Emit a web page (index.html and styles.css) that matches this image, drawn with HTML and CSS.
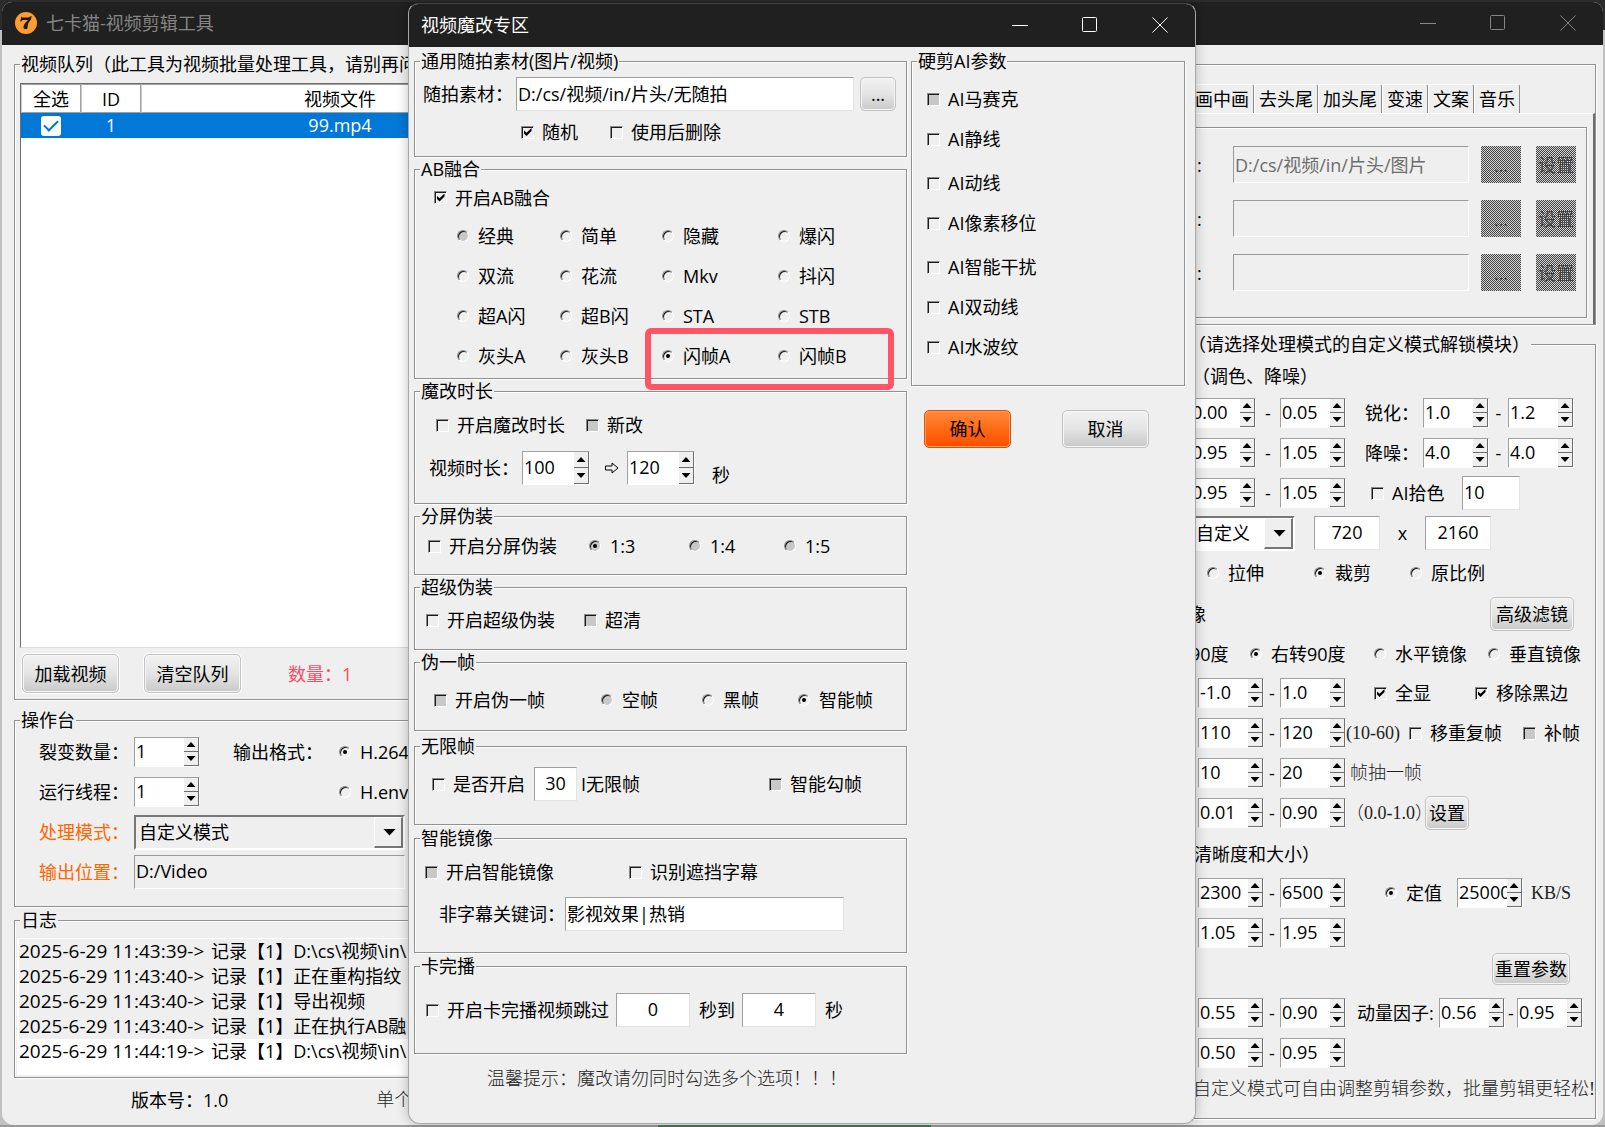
FILE: index.html
```html
<!DOCTYPE html>
<html lang="zh-CN">
<head>
<meta charset="utf-8">
<title>七卡猫-视频剪辑工具</title>
<link rel="stylesheet" href="styles.css">
</head>
<body>
<main class="window main-window">
  <header class="titlebar titlebar-inactive">
    <svg class="logo" viewBox="0 0 24 24" aria-hidden="true"><circle cx="12" cy="12" r="11" fill="#ff9c32"/><path d="M7.400 5.200l.8 1.200h6.200l2.400-1.200h.9l-.9 3.600c-2.600 2.800-3.400 5.400-3.200 8.200-.6 1.600-3.600 1.600-4.200-.2-.2-3 2-5.400 4.400-7.400l-.4-.4H9.200c-1 0-1.500.5-2 1.600h-.9z" fill="#1d1a18"/></svg>
    <h1 class="caption">七卡猫-视频剪辑工具</h1>
    <div class="window-buttons">
      <button type="button" aria-label="最小化"><svg viewBox="0 0 16 16"><path d="M0 8.500h16"/></svg></button>
      <button type="button" aria-label="最大化"><svg viewBox="0 0 16 16"><rect x=".5" y=".5" width="14" height="14" rx="1"/></svg></button>
      <button type="button" aria-label="关闭"><svg viewBox="0 0 16 16"><path d="M.5.5l15 15M15.500.5l-15 15"/></svg></button>
    </div>
  </header>
  <div class="main-body">
    <div class="left-pane">
      <fieldset class="queue">
        <legend>视频队列（此工具为视频批量处理工具，请别再问</legend>
        <div class="table-box">
          <table>
            <thead><tr><th class="col-small">全选</th><th class="col-small">ID</th><th>视频文件</th></tr></thead>
            <tbody><tr><td><input class="tick-modern" type="checkbox" checked aria-label="选择 99.mp4"></td><td>1</td><td>99.mp4</td></tr></tbody>
          </table>
        </div>
        <div class="queue-actions">
          <button type="button" class="btn btn-tall">加载视频</button>
          <button type="button" class="btn btn-tall">清空队列</button>
          <span class="count">数量：1</span>
        </div>
      </fieldset>
      <fieldset class="console">
        <legend>操作台</legend>
        <div class="row console-row">
          <label for="split">裂变数量：</label>
          <span class="spin"><input id="split" type="text" value="1"><button type="button" aria-label="加"></button><button type="button" aria-label="减"></button></span>
          <span class="format-label">输出格式：</span>
          <label class="opt"><input type="radio" name="fmt" checked>H.264</label>
        </div>
        <div class="row console-row">
          <label for="threads">运行线程：</label>
          <span class="spin"><input id="threads" type="text" value="1"><button type="button" aria-label="加"></button><button type="button" aria-label="减"></button></span>
          <span></span>
          <label class="opt"><input type="radio" name="fmt">H.envc</label>
        </div>
        <div class="row console-wide">
          <label class="accent" for="mode">处理模式：</label>
          <span class="combo"><select id="mode"><option>自定义模式</option></select></span>
        </div>
        <div class="row console-wide">
          <label class="accent" for="out">输出位置：</label>
          <input class="field field-flat" id="out" type="text" value="D:/Video">
        </div>
      </fieldset>
      <fieldset class="log">
        <legend>日志</legend>
        <ul class="log-list">
          <li><span class="stamp">2025-6-29 11:43:39-&gt;</span>记录【1】D:\cs\视频\in\</li>
          <li><span class="stamp">2025-6-29 11:43:40-&gt;</span>记录【1】正在重构指纹</li>
          <li><span class="stamp">2025-6-29 11:43:40-&gt;</span>记录【1】导出视频</li>
          <li><span class="stamp">2025-6-29 11:43:40-&gt;</span>记录【1】正在执行AB融</li>
          <li><span class="stamp">2025-6-29 11:44:19-&gt;</span>记录【1】D:\cs\视频\in\</li>
        </ul>
      </fieldset>
      <footer class="main-footer"><span>版本号：1.0</span><span class="kai">单个</span></footer>
    </div>

    <div class="right-pane">
      <section class="tab-group">
        <nav class="tabs">
          <button type="button">画中画</button><button type="button">去头尾</button><button type="button">加头尾</button><button type="button">变速</button><button type="button">文案</button><button type="button">音乐</button>
        </nav>
        <div class="tab-panel">
          <div class="tab-inner">
            <div class="path-row"><label for="p1">:</label><input class="field" id="p1" type="text" value="D:/cs/视频/in/片头/图片" disabled><button type="button" class="dither" disabled>...</button><button type="button" class="dither" disabled>设置</button></div>
            <div class="path-row"><label for="p2">:</label><input class="field" id="p2" type="text" disabled><button type="button" class="dither" disabled>...</button><button type="button" class="dither" disabled>设置</button></div>
            <div class="path-row"><label for="p3">:</label><input class="field" id="p3" type="text" disabled><button type="button" class="dither" disabled>...</button><button type="button" class="dither" disabled>设置</button></div>
          </div>
        </div>
      </section>
      <fieldset class="custom">
        <legend>（请选择处理模式的自定义模式解锁模块）</legend>
        <div class="row custom-head">（调色、降噪）</div>
        <div class="row range-a">
          <span class="spin"><input type="text" value="0.00" aria-label="亮度最小"><button type="button" aria-label="加"></button><button type="button" aria-label="减"></button></span><span class="dash">-</span>
          <span class="spin"><input type="text" value="0.05" aria-label="亮度最大"><button type="button" aria-label="加"></button><button type="button" aria-label="减"></button></span>
          <label for="sharp">锐化：</label>
          <span class="spin"><input id="sharp" type="text" value="1.0"><button type="button" aria-label="加"></button><button type="button" aria-label="减"></button></span><span class="dash">-</span>
          <span class="spin"><input type="text" value="1.2" aria-label="锐化最大"><button type="button" aria-label="加"></button><button type="button" aria-label="减"></button></span>
        </div>
        <div class="row range-a">
          <span class="spin"><input type="text" value="0.95" aria-label="对比度最小"><button type="button" aria-label="加"></button><button type="button" aria-label="减"></button></span><span class="dash">-</span>
          <span class="spin"><input type="text" value="1.05" aria-label="对比度最大"><button type="button" aria-label="加"></button><button type="button" aria-label="减"></button></span>
          <label for="noise">降噪：</label>
          <span class="spin"><input id="noise" type="text" value="4.0"><button type="button" aria-label="加"></button><button type="button" aria-label="减"></button></span><span class="dash">-</span>
          <span class="spin"><input type="text" value="4.0" aria-label="降噪最大"><button type="button" aria-label="加"></button><button type="button" aria-label="减"></button></span>
        </div>
        <div class="row range-pick">
          <span class="spin"><input type="text" value="0.95" aria-label="饱和度最小"><button type="button" aria-label="加"></button><button type="button" aria-label="减"></button></span><span class="dash">-</span>
          <span class="spin"><input type="text" value="1.05" aria-label="饱和度最大"><button type="button" aria-label="加"></button><button type="button" aria-label="减"></button></span>
          <label class="opt"><input type="checkbox">AI拾色</label>
          <input class="field" type="text" value="10" aria-label="拾色数量">
        </div>
        <div class="row size-row">
          <span class="combo combo-white"><select aria-label="分辨率"><option>自定义</option></select></span>
          <input class="field centered" type="text" value="720" aria-label="宽"><span class="dash">x</span><input class="field centered" type="text" value="2160" aria-label="高">
        </div>
        <div class="row fit-row">
          <label class="opt"><input type="radio" name="fit">拉伸</label>
          <label class="opt"><input type="radio" name="fit" checked>裁剪</label>
          <label class="opt"><input type="radio" name="fit">原比例</label>
        </div>
        <div class="row filter-row"><span>像</span><button type="button" class="btn btn-filter">高级滤镜</button></div>
        <div class="row rotate-row">
          <span>90度</span>
          <label class="opt"><input type="radio" name="rot" checked>右转90度</label>
          <label class="opt"><input type="radio" name="mir">水平镜像</label>
          <label class="opt"><input type="radio" name="mir">垂直镜像</label>
        </div>
        <div class="row range-b show-row">
          <span class="spin"><input type="text" value="-1.0" aria-label="缩放最小"><button type="button" aria-label="加"></button><button type="button" aria-label="减"></button></span><span class="dash">-</span>
          <span class="spin"><input type="text" value="1.0" aria-label="缩放最大"><button type="button" aria-label="加"></button><button type="button" aria-label="减"></button></span>
          <span></span>
          <label class="opt"><input type="checkbox" checked>全显</label>
          <label class="opt"><input type="checkbox" checked>移除黑边</label>
        </div>
        <div class="row range-b fps-row">
          <span class="spin"><input type="text" value="110" aria-label="帧率最小"><button type="button" aria-label="加"></button><button type="button" aria-label="减"></button></span><span class="dash">-</span>
          <span class="spin"><input type="text" value="120" aria-label="帧率最大"><button type="button" aria-label="加"></button><button type="button" aria-label="减"></button></span>
          <span class="kai">(10-60)</span>
          <label class="opt"><input type="checkbox">移重复帧</label>
          <label class="opt"><input type="checkbox" class="mixed">补帧</label>
        </div>
        <div class="row range-b drop-row">
          <span class="spin"><input type="text" value="10" aria-label="抽帧最小"><button type="button" aria-label="加"></button><button type="button" aria-label="减"></button></span><span class="dash">-</span>
          <span class="spin"><input type="text" value="20" aria-label="抽帧最大"><button type="button" aria-label="加"></button><button type="button" aria-label="减"></button></span>
          <span class="kai">帧抽一帧</span>
        </div>
        <div class="row range-b alpha-row">
          <span class="spin"><input type="text" value="0.01" aria-label="透明最小"><button type="button" aria-label="加"></button><button type="button" aria-label="减"></button></span><span class="dash">-</span>
          <span class="spin"><input type="text" value="0.90" aria-label="透明最大"><button type="button" aria-label="加"></button><button type="button" aria-label="减"></button></span>
          <span class="kai">（0.0-1.0）</span>
          <button type="button" class="btn">设置</button>
        </div>
        <div class="row clarity-row">清晰度和大小）</div>
        <div class="row range-b rate-row">
          <span class="spin"><input type="text" value="2300" aria-label="码率最小"><button type="button" aria-label="加"></button><button type="button" aria-label="减"></button></span><span class="dash">-</span>
          <span class="spin"><input type="text" value="6500" aria-label="码率最大"><button type="button" aria-label="加"></button><button type="button" aria-label="减"></button></span>
          <label class="opt"><input type="radio" name="rate" checked>定值</label>
          <span class="spin"><input type="text" value="25000" aria-label="固定码率"><button type="button" aria-label="加"></button><button type="button" aria-label="减"></button></span>
          <span class="kai">KB/S</span>
        </div>
        <div class="row range-b">
          <span class="spin"><input type="text" value="1.05" aria-label="倍率最小"><button type="button" aria-label="加"></button><button type="button" aria-label="减"></button></span><span class="dash">-</span>
          <span class="spin"><input type="text" value="1.95" aria-label="倍率最大"><button type="button" aria-label="加"></button><button type="button" aria-label="减"></button></span>
        </div>
        <div class="row reset-row"><button type="button" class="btn btn-reset">重置参数</button></div>
        <div class="row range-b factor-row">
          <span class="spin"><input type="text" value="0.55" aria-label="因子最小"><button type="button" aria-label="加"></button><button type="button" aria-label="减"></button></span><span class="dash">-</span>
          <span class="spin"><input type="text" value="0.90" aria-label="因子最大"><button type="button" aria-label="加"></button><button type="button" aria-label="减"></button></span>
          <label for="mom">动量因子:</label>
          <span class="spin"><input id="mom" type="text" value="0.56"><button type="button" aria-label="加"></button><button type="button" aria-label="减"></button></span><span class="dash">-</span>
          <span class="spin"><input type="text" value="0.95" aria-label="动量最大"><button type="button" aria-label="加"></button><button type="button" aria-label="减"></button></span>
        </div>
        <div class="row range-b">
          <span class="spin"><input type="text" value="0.50" aria-label="权重最小"><button type="button" aria-label="加"></button><button type="button" aria-label="减"></button></span><span class="dash">-</span>
          <span class="spin"><input type="text" value="0.95" aria-label="权重最大"><button type="button" aria-label="加"></button><button type="button" aria-label="减"></button></span>
        </div>
        <p class="custom-tip kai">自定义模式可自由调整剪辑参数，批量剪辑更轻松!</p>
      </fieldset>
    </div>
  </div>
</main>

<section class="window dialog" role="dialog" aria-labelledby="dialog-title">
  <header class="titlebar">
    <h2 class="caption" id="dialog-title">视频魔改专区</h2>
    <div class="window-buttons">
      <button type="button" aria-label="最小化"><svg viewBox="0 0 16 16"><path d="M0 8.500h16"/></svg></button>
      <button type="button" aria-label="最大化"><svg viewBox="0 0 16 16"><rect x=".5" y=".5" width="14" height="14" rx="1"/></svg></button>
      <button type="button" aria-label="关闭"><svg viewBox="0 0 16 16"><path d="M.5.5l15 15M15.500.5l-15 15"/></svg></button>
    </div>
  </header>
  <div class="dialog-body">
    <div class="dialog-main">
      <fieldset class="g-source">
        <legend>通用随拍素材(图片/视频)</legend>
        <div class="row r-source"><label for="src">随拍素材：</label><input class="field" id="src" type="text" value="D:/cs/视频/in/片头/无随拍"><button type="button" class="btn">...</button></div>
        <div class="row r-source-opts"><label class="opt"><input type="checkbox" checked>随机</label><label class="opt"><input type="checkbox">使用后删除</label></div>
      </fieldset>
      <fieldset class="g-blend">
        <legend>AB融合</legend>
        <div class="row r-blend-on"><label class="opt"><input type="checkbox" checked>开启AB融合</label></div>
        <div class="row r-blend"><label class="opt"><input type="radio" name="ab" class="mixed">经典</label><label class="opt"><input type="radio" name="ab">简单</label><label class="opt"><input type="radio" name="ab">隐藏</label><label class="opt"><input type="radio" name="ab">爆闪</label></div>
        <div class="row r-blend"><label class="opt"><input type="radio" name="ab">双流</label><label class="opt"><input type="radio" name="ab">花流</label><label class="opt"><input type="radio" name="ab">Mkv</label><label class="opt"><input type="radio" name="ab">抖闪</label></div>
        <div class="row r-blend"><label class="opt"><input type="radio" name="ab">超A闪</label><label class="opt"><input type="radio" name="ab">超B闪</label><label class="opt"><input type="radio" name="ab">STA</label><label class="opt"><input type="radio" name="ab">STB</label></div>
        <div class="row r-blend"><label class="opt"><input type="radio" name="ab">灰头A</label><label class="opt"><input type="radio" name="ab">灰头B</label><label class="opt"><input type="radio" name="ab" checked>闪帧A</label><label class="opt"><input type="radio" name="ab">闪帧B</label></div>
        <span class="highlight"></span>
      </fieldset>
      <fieldset class="g-length">
        <legend>魔改时长</legend>
        <div class="row r-length-on"><label class="opt"><input type="checkbox">开启魔改时长</label><label class="opt"><input type="checkbox" class="mixed">新改</label></div>
        <div class="row r-length">
          <label for="len">视频时长：</label>
          <span class="spin spin-tall"><input id="len" type="text" value="100"><button type="button" aria-label="加"></button><button type="button" aria-label="减"></button></span>
          <svg class="arrow" viewBox="0 0 16 12" aria-hidden="true"><path d="M1.500 4h6.500V1l6 5-6 5V8H1.500z"/></svg>
          <span class="spin spin-tall"><input type="text" value="120" aria-label="最长时长"><button type="button" aria-label="加"></button><button type="button" aria-label="减"></button></span>
          <span class="unit">秒</span>
        </div>
      </fieldset>
      <fieldset class="g-split">
        <legend>分屏伪装</legend>
        <div class="row r-split"><label class="opt"><input type="checkbox">开启分屏伪装</label><label class="opt"><input type="radio" name="sp" class="mixed" checked>1:3</label><label class="opt"><input type="radio" name="sp" class="mixed">1:4</label><label class="opt"><input type="radio" name="sp" class="mixed">1:5</label></div>
      </fieldset>
      <fieldset class="g-super">
        <legend>超级伪装</legend>
        <div class="row r-super"><label class="opt"><input type="checkbox">开启超级伪装</label><label class="opt"><input type="checkbox" class="mixed">超清</label></div>
      </fieldset>
      <fieldset class="g-fake">
        <legend>伪一帧</legend>
        <div class="row r-fake"><label class="opt"><input type="checkbox" class="mixed">开启伪一帧</label><label class="opt"><input type="radio" name="fk" class="mixed">空帧</label><label class="opt"><input type="radio" name="fk">黑帧</label><label class="opt"><input type="radio" name="fk" checked>智能帧</label></div>
      </fieldset>
      <fieldset class="g-endless">
        <legend>无限帧</legend>
        <div class="row r-endless"><label class="opt"><input type="checkbox">是否开启</label><input class="field centered" id="endless" type="text" value="30"><label class="after" for="endless">I无限帧</label><label class="opt"><input type="checkbox" class="mixed">智能勾帧</label></div>
      </fieldset>
      <fieldset class="g-mirror">
        <legend>智能镜像</legend>
        <div class="row r-mirror"><label class="opt"><input type="checkbox" class="mixed">开启智能镜像</label><label class="opt"><input type="checkbox">识别遮挡字幕</label></div>
        <div class="row r-keyword"><label for="kw">非字幕关键词：</label><input class="field" id="kw" type="text" value="影视效果|热销"></div>
      </fieldset>
      <fieldset class="g-finish">
        <legend>卡完播</legend>
        <div class="row r-finish"><label class="opt"><input type="checkbox">开启卡完播视频跳过</label><input class="field centered" type="text" value="0" aria-label="起始秒"><span class="mid">秒到</span><input class="field centered" type="text" value="4" aria-label="结束秒"><span class="mid">秒</span></div>
      </fieldset>
      <p class="dialog-tip kai">温馨提示：魔改请勿同时勾选多个选项！！！</p>
    </div>
    <div class="dialog-side">
      <fieldset class="g-ai">
        <legend>硬剪AI参数</legend>
        <label class="opt"><input type="checkbox" class="mixed">AI马赛克</label>
        <label class="opt pair-end"><input type="checkbox">AI静线</label>
        <label class="opt"><input type="checkbox">AI动线</label>
        <label class="opt pair-end"><input type="checkbox">AI像素移位</label>
        <label class="opt"><input type="checkbox">AI智能干扰</label>
        <label class="opt"><input type="checkbox">AI双动线</label>
        <label class="opt"><input type="checkbox">AI水波纹</label>
      </fieldset>
      <div class="dialog-actions"><button type="button" class="btn btn-primary">确认</button><button type="button" class="btn">取消</button></div>
    </div>
  </div>
</section>
</body>
</html>
```

FILE: styles.css
```css
* { box-sizing: border-box; }

html, body { height: 100%; }

body {
  margin: 0;
  position: relative;
  overflow: hidden;
  color: #000;
  font: 400 18px/24px "Open Sans", "Noto Sans CJK SC", sans-serif;
  background:
    linear-gradient(90deg, #9a9a9a 41%, #4a7a55 0 58%, #9a9a9a 0) bottom / 100% 2px no-repeat,
    linear-gradient(#2c2c2c 30px, #c0c0c0 0);
}

button, input, select {
  margin: 0;
  padding: 0;
  font: inherit;
  color: inherit;
  border-radius: 0;
}

h1, h2, p, ul { margin: 0; padding: 0; font-weight: inherit; font-size: 18px; }

/* Windows */
.window {
  position: absolute;
  background: #efefef;
  overflow: hidden;
}

.main-window {
  inset: 2px;
  border-radius: 10px 10px 12px 12px;
}

.dialog {
  inset: 3px 409px 3px 408px;
  border-radius: 10px 10px 12px 12px;
  border: 1px solid #a8a8a8;
  border-top-color: #444;
  box-shadow: 0 0 12px rgba(0, 0, 0, .25);
}

.titlebar {
  display: flex;
  align-items: center;
  height: 43px;
  padding: 0 27px 2px 12px;
  background: #202020;
  color: #fff;
}

.titlebar-inactive { color: #858585; }

.logo { width: 24px; height: 24px; margin-right: 8px; }

.window-buttons { display: flex; gap: 54px; margin-left: auto; }

.window-buttons button {
  width: 16px;
  height: 16px;
  border: 0;
  background: none;
}

.window-buttons svg {
  display: block;
  width: 16px;
  height: 16px;
  fill: none;
  stroke: currentColor;
  stroke-width: 1;
}

/* Etched group boxes */
fieldset, .tab-group, .tab-inner {
  min-width: 0;
  margin: 0;
  padding: 0;
  border: 1px solid #919191;
  box-shadow: 1px 1px 0 #fff, inset 1px 1px 0 #fff;
}

legend {
  height: 20px;
  margin-left: 5px;
  padding: 0 1px;
  line-height: 20px;
  white-space: nowrap;
  background: #efefef;
}

.row {
  display: grid;
  align-items: center;
  height: 40px;
  white-space: nowrap;
}

/* Tick boxes and radios */
.opt { display: flex; align-items: center; gap: 8px; white-space: nowrap; }

.opt input {
  appearance: none;
  flex: none;
  display: grid;
  place-items: center;
  width: 13px;
  height: 13px;
  border: 1px solid;
  border-color: #8a8a8a #fff #fff #8a8a8a;
  box-shadow: inset 1px 1px 0 #1a1a1a;
  background: #efefef;
}

.opt input[type="radio"] {
  width: 12px;
  height: 12px;
  margin-right: 1px;
  border-radius: 50%;
}

.opt input.mixed { background: #c8c8c8; }

.opt input[type="checkbox"]:checked::before {
  content: "";
  width: 8px;
  height: 8px;
  background: #000;
  clip-path: polygon(0 25%, 38% 60%, 100% 0, 100% 38%, 38% 100%, 0 62%);
}

.opt input[type="radio"]:checked::before {
  content: "";
  width: 4px;
  height: 4px;
  border-radius: 50%;
  background: #000;
}

.tick-modern {
  appearance: none;
  display: inline-grid;
  place-items: center;
  width: 20px;
  height: 20px;
  border-radius: 3px;
  background: #fff;
  vertical-align: middle;
}

.tick-modern::before {
  content: "";
  width: 12px;
  height: 6px;
  border: solid #0078d7;
  border-width: 0 0 2px 2px;
  transform: rotate(-45deg);
  margin-bottom: 4px;
}

/* Text boxes */
.field {
  width: 100%;
  height: 34px;
  padding: 0 1px 2px;
  border: 1px solid;
  border-color: #a0a0a0 #e3e3e3 #e3e3e3 #a0a0a0;
  background: #fff;
}

.field:disabled, .field-flat { background: #efefef; border-color: #9a9a9a #fff #fff #9a9a9a; }
.field:disabled { color: #6d6d6d; }
.centered { text-align: center; }

.spin {
  display: grid;
  grid-template: 1fr 1fr / 1fr 15px;
  width: 66px;
  height: 30px;
  border: 1px solid;
  border-color: #a0a0a0 #fff #fff #a0a0a0;
  background: #fff;
}

.spin-tall { width: 68px; height: 34px; }

.spin input {
  grid-row: 1 / 3;
  min-width: 0;
  width: 100%;
  padding: 0 0 2px 1px;
  border: 0;
  background: none;
}

.spin button {
  display: grid;
  place-items: center;
  border: solid #6e6e6e;
  border-width: 0 1px 1px 0;
  background: #efefef;
}

.spin button::before {
  content: "";
  width: 9px;
  height: 5px;
  background: #000;
  clip-path: polygon(50% 0, 100% 100%, 0 100%);
}

.spin button:last-child::before { clip-path: polygon(0 0, 100% 0, 50% 100%); }

.combo {
  position: relative;
  display: block;
  height: 35px;
  border: 2px solid;
  border-color: #777 #fff #fff #777;
}

.combo select {
  appearance: none;
  width: 100%;
  height: 100%;
  padding-left: 3px;
  border: 0;
  background: #efefef;
}

.combo-white select { background: #fff; padding-left: 5px; }

.combo::after {
  content: "";
  position: absolute;
  inset: 0 0 0 auto;
  width: 26px;
  border: solid;
  border-width: 1px 2px 2px 1px;
  border-color: #fff #777 #777 #fff;
  background: #efefef;
  pointer-events: none;
}

.combo::before {
  content: "";
  position: absolute;
  z-index: 1;
  inset: 0 7px 0 auto;
  width: 13px;
  height: 7px;
  margin: auto 0;
  background: #000;
  clip-path: polygon(0 0, 100% 0, 50% 100%);
  pointer-events: none;
}

/* Buttons */
.btn {
  height: 34px;
  border: 1px solid #c2c2c2;
  border-radius: 5px;
  background: linear-gradient(#f2f2f2, #e4e4e4 50%, #c9c9c9);
  box-shadow: inset 0 0 0 1px #f6f6f6;
  white-space: nowrap;
}

.btn-tall { width: 97px; height: 39px; box-shadow: inset 0 0 0 1px #f6f6f6, 0 0 0 1px #fff; }

.btn-primary {
  border-color: #d8540c;
  background: linear-gradient(#ff8a3c, #ff6a14 50%, #ff4e00);
  box-shadow: inset 0 0 0 1px #ff9d5c;
}

.dither {
  border: 0;
  height: 37px;
  color: #444;
  background: conic-gradient(#414141 25%, #d6d6d6 0 50%, #414141 0 75%, #d6d6d6 0) 0 0 / 2px 2px;
}

.kai {
  font-family: "Liberation Serif", "Noto Sans CJK SC", serif;
  font-weight: 300;
  color: #222;
}

.accent { color: #ff6600; }
.dash { text-align: center; }

/* Main window layout */
.main-body {
  display: flex;
  justify-content: space-between;
  padding: 9px 7px 0 12px;
}

.left-pane { flex: 1; max-width: 532px; }

.queue { padding: 9px 5px 0; }
.queue legend { margin-left: 0; }

.table-box {
  height: 565px;
  border: 1px solid;
  border-color: #6e6e6e #dcdcdc #dcdcdc #6e6e6e;
  background: #fff;
}

table { width: 100%; border-collapse: separate; border-spacing: 0; table-layout: fixed; }
.col-small { width: 60px; }
th { height: 29px; padding: 0; font-weight: inherit; border: 1px solid #a0a0a0; border-left-color: #ccc; }
td { height: 25px; padding: 0 0 1px; line-height: 20px; text-align: center; color: #fff; background: #0078d7; }

.queue-actions { display: flex; align-items: center; height: 51px; padding-left: 2px; }
.queue-actions .btn + .btn { margin-left: 25px; }
.count { margin-left: 47px; color: #f94d62; }

.console { margin-top: 10px; padding: 2px 0 14px; }
.console-row { grid-template-columns: 95px 99px 106px auto; padding-left: 24px; }
.console-wide { grid-template-columns: 95px 271px; padding-left: 24px; }

.log { margin-top: 3px; padding: 8px 2px 2px; }
.log legend { margin-left: 3px; }
.log-list { height: 137px; padding-left: 1px; border: 1px solid #fff; background: #fff; list-style: none; overflow: hidden; }
.log-list li { height: 25px; line-height: 25px; white-space: nowrap; background: #efefef; }
.log-list li:last-child { background: #fff; }
.stamp { display: inline-block; width: 192px; font-size: 19px; }

.main-footer { display: flex; gap: 148px; padding: 10px 0 0 117px; }

.right-pane { flex: 0 0 418px; }

.tab-group { margin-top: 10px; padding-top: 19px; }
.tabs { display: flex; padding-left: 14px; }

.tabs button {
  width: 64px;
  height: 29px;
  border: 1px solid;
  border-color: #fff #8a8a8a transparent #fff;
  border-radius: 0 3px 0 0;
  border-bottom: 0;
  background: none;
}

.tabs button:nth-child(n + 4) { width: 46px; }

.tab-panel {
  padding: 13px 6px 6px 0;
  border-top: 1px solid #fff;
  border-right: 2px solid #6e6e6e;
}

.tab-inner { display: grid; gap: 17px; padding: 18px 0 26px 20px; }

.path-row {
  display: grid;
  grid-template-columns: 36px 236px 55px 51px;
  align-items: center;
}

.path-row .field { height: 37px; }
.path-row .dither { margin-left: 12px; width: 40px; }

.custom { margin-top: 9px; padding: 5px 0 13px; }
.custom legend { margin-left: 11px; }
.custom-head { height: 34px; padding-left: 16px; }
.range-a { grid-template-columns: 66px 24px 66px 19px 58px 66px 19px 66px; padding-left: 14px; }
.range-a label { grid-column: 5; }
.range-pick { grid-template-columns: 66px 24px 91px 91px 58px; padding-left: 14px; }
.size-row { grid-template-columns: 125px 66px 45px 66px; padding-left: 13px; }
.size-row .combo { width: 106px; }
.fit-row { grid-template-columns: 107px 96px auto; padding-left: 31px; }
.filter-row { display: flex; justify-content: space-between; padding: 2px 21px 0 12px; }
.btn-filter { width: 84px; }
.rotate-row { grid-template-columns: 60px 124px 114px auto; padding: 2px 0 0 14px; }
.range-b { grid-template-columns: 66px 16px 66px; padding-left: 22px; }
.show-row { grid-template-columns: 66px 16px 66px 28px 101px auto; }
.fps-row { grid-template-columns: 66px 16px 66px 63px 114px auto; }
.drop-row { grid-template-columns: 66px 16px 70px auto; }
.alpha-row { grid-template-columns: 66px 16px 66px 79px 44px; }
.clarity-row { padding: 2px 0 0 18px; }
.rate-row { grid-template-columns: 66px 16px 105px 72px 74px auto; }
.reset-row { display: flex; justify-content: flex-end; align-items: flex-start; padding-right: 25px; }
.reset-row .btn { height: 32px; }
.btn-reset { width: 78px; }
.factor-row { grid-template-columns: 66px 16px 77px 82px 66px 12px 66px; }
.custom-tip { padding: 4px 0 4px 17px; white-space: nowrap; }

/* Dialog layout */
.dialog .titlebar { padding: 0 27px 2px 12px; }

.dialog-body {
  display: grid;
  grid-template-columns: 493px minmax(0, 274px);
  column-gap: 4px;
  padding: 4px 9px 0 5px;
}

.dialog-main, .dialog-side { display: flex; flex-direction: column; gap: 2px; }

.g-source { padding: 5px 0 4px; }
.r-source { grid-template-columns: 93px 338px 42px; height: 36px; padding-left: 8px; }
.r-source .btn { margin-left: 6px; }
.r-source-opts { grid-template-columns: 89px auto; padding-left: 106px; }

.g-blend { position: relative; padding-bottom: 2px; }
.r-blend-on { height: 37px; padding-left: 19px; }
.r-blend { grid-template-columns: 103px 102px 116px auto; padding-left: 42px; }

.highlight {
  position: absolute;
  right: 12px;
  bottom: -12px;
  width: 249px;
  height: 62px;
  border: 6px solid #ff5566;
  border-radius: 6px;
  pointer-events: none;
}

.g-length { padding: 4px 0 12px; }
.r-length-on { grid-template-columns: 150px auto; padding-left: 21px; }
.r-length { grid-template-columns: 93px 67px 38px 67px auto; height: 46px; padding-left: 14px; }
.arrow { width: 16px; height: 12px; margin-left: 15px; fill: none; stroke: #000; }
.unit { padding-left: 18px; align-self: end; padding-bottom: 4px; }

.g-split { padding: 0 0 8px; }
.r-split { grid-template-columns: 161px 100px 95px auto; padding-left: 13px; }

.g-super { padding: 3px 0 9px; }
.r-super { grid-template-columns: 158px auto; padding-left: 11px; }

.g-fake { padding: 8px 0 10px; }
.r-fake { grid-template-columns: 167px 101px 96px auto; padding-left: 19px; }

.g-endless { margin-top: 3px; padding: 8px 0 20px; }
.r-endless { grid-template-columns: 102px 43px 192px auto; padding-left: 17px; }
.after { padding-left: 4px; }

.g-mirror { margin-top: 1px; padding: 4px 0 16px; }
.r-mirror { grid-template-columns: 204px auto; padding-left: 10px; }
.r-keyword { grid-template-columns: 126px 279px; height: 44px; padding-left: 24px; }

.g-finish { margin-top: 1px; padding: 14px 0 23px; }
.r-finish { grid-template-columns: 190px 74px 52px 74px auto; padding-left: 11px; }
.mid { padding-left: 9px; }

.dialog-tip { padding: 11px 0 0 73px; }

.g-ai { padding: 8px 0 18px; }
.g-ai .opt { height: 40px; padding-left: 15px; }
.g-ai .pair-end { margin-bottom: 4px; }

.dialog-actions { display: flex; align-items: flex-start; gap: 51px; padding: 22px 0 0 13px; }
.dialog-actions .btn { width: 87px; height: 38px; }
```
